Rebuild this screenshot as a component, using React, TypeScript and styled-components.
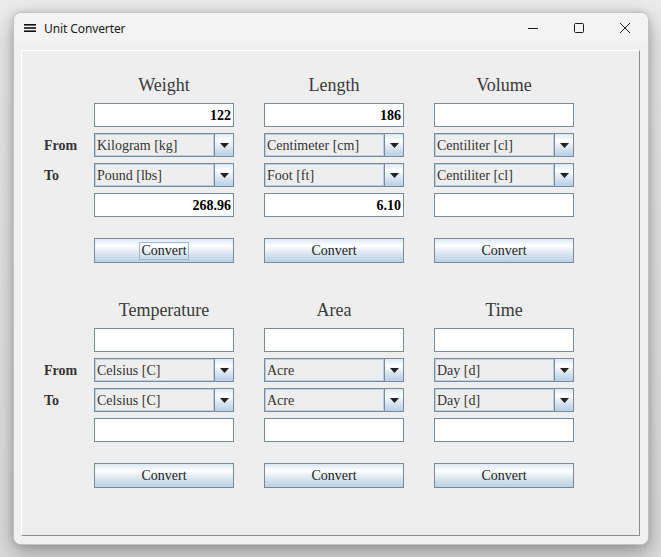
import React from "react";
import styled, { createGlobalStyle } from "styled-components";

const Global = createGlobalStyle`
  html, body { margin: 0; padding: 0; }
  body { width: 661px; height: 557px; overflow: hidden; background: #e6e6e6; }
`;

const Page = styled.div`
  width: 661px;
  height: 557px;
  box-sizing: border-box;
  padding: 12px 0 0 13px;
  background: linear-gradient(#ebebeb, #dcdcdc);
`;

const Window = styled.div`
  width: 636px;
  height: 533px;
  box-sizing: border-box;
  border: 1px solid #c2c2c2;
  border-radius: 8px;
  background: #f0f0f0;
  box-shadow: 0 8px 22px rgba(0, 0, 0, 0.33), 0 0 6px rgba(0, 0, 0, 0.12);
  display: flex;
  flex-direction: column;
  overflow: hidden;
`;

const TitleBar = styled.div`
  height: 30px;
  flex: none;
  display: flex;
  align-items: center;
  padding-left: 10px;
  background: #f3f3f3;
  font-family: "Segoe UI", "Noto Sans", "Open Sans", sans-serif;
  font-size: 12px;
  color: #1a1a1a;
`;

const AppIcon = styled.svg`
  width: 12px;
  height: 8px;
  margin-right: 8px;
  flex: none;
`;

const TitleText = styled.span`
  letter-spacing: -0.1px;
`;

const Controls = styled.div`
  margin-left: auto;
  display: flex;
  height: 100%;
`;

const CaptionButton = styled.div`
  width: 46px;
  height: 30px;
  display: flex;
  align-items: center;
  justify-content: center;
  color: #1a1a1a;
`;

const Content = styled.div`
  flex: 1;
  display: flex;
  padding: 7px 8px 8px 7px;
  background: #f0f0f0;
`;

const Panel = styled.div`
  flex: 1;
  display: flex;
  flex-direction: column;
  gap: 37px;
  box-sizing: border-box;
  padding: 24px 0 0 22px;
  border-top: 1px solid #ffffff;
  border-left: 1px solid #ffffff;
  border-right: 1px solid #8c8c8c;
  border-bottom: 1px solid #8c8c8c;
  background: #eeeeee;
  font-family: "Liberation Serif", "Times New Roman", serif;
`;

const Group = styled.div`
  display: flex;
  align-items: flex-start;
`;

const LabelCol = styled.div`
  width: 50px;
  flex: none;
  display: flex;
  flex-direction: column;
  gap: 6px;
  padding-top: 58px;
`;

const RowLabel = styled.div`
  height: 24px;
  box-sizing: border-box;
  padding-top: 1px;
  line-height: 24px;
  font-size: 14px;
  font-weight: bold;
  color: #333333;
  white-space: nowrap;
`;

const Units = styled.div`
  display: flex;
  gap: 30px;
`;

const UnitCol = styled.div`
  width: 140px;
  display: flex;
  flex-direction: column;
  gap: 6px;
`;

const UnitTitle = styled.div`
  height: 20px;
  line-height: 20px;
  margin-bottom: 2px;
  font-size: 18px;
  color: #3a3a3a;
  text-align: center;
  white-space: nowrap;
`;

const Field = styled.input`
  width: 140px;
  height: 24px;
  box-sizing: border-box;
  margin: 0;
  padding: 1px 2px 0 2px;
  border: 1px solid #7a8a99;
  border-radius: 0;
  background: #ffffff;
  font-family: "Liberation Serif", "Times New Roman", serif;
  font-size: 14px;
  font-weight: bold;
  color: #000000;
  text-align: right;
  outline: none;
`;

const Combo = styled.div`
  width: 140px;
  height: 24px;
  box-sizing: border-box;
  display: flex;
  border: 1px solid #7a8a99;
  background: #eeeeee;
`;

const ComboValue = styled.div`
  flex: 1;
  box-sizing: border-box;
  padding: 1px 0 0 2px;
  line-height: 22px;
  font-size: 14px;
  color: #333333;
  box-shadow: inset 0 0 0 1px #b8cfe5;
  white-space: nowrap;
  overflow: hidden;
`;

const oceanGradient = `linear-gradient(to bottom, #dde8f3 0%, #ffffff 30%, #dde8f3 60%, #b8cfe5 100%)`;

const ArrowButton = styled.div`
  width: 18px;
  flex: none;
  border-left: 1px solid #7a8a99;
  background: ${oceanGradient};
  display: flex;
  align-items: center;
  justify-content: center;
`;

const ConvertButton = styled.button`
  width: 140px;
  height: 25px;
  margin: 15px 0 0 0;
  padding: 0;
  box-sizing: border-box;
  border: 1px solid #7a8a99;
  border-radius: 0;
  background: ${oceanGradient};
  font-family: "Liberation Serif", "Times New Roman", serif;
  font-size: 14px;
  color: #222222;
  display: flex;
  align-items: center;
  justify-content: center;
  cursor: pointer;
`;

const ButtonText = styled.span<{ $focused?: boolean }>`
  display: block;
  height: 16px;
  line-height: 16px;
  padding: 0 1px;
  border: 1px solid ${(p) => (p.$focused ? "#a3b8cc" : "transparent")};
`;

type Unit = {
  title: string;
  from: string;
  to: string;
  input: string;
  output: string;
  focused?: boolean;
};

const groups: Unit[][] = [
  [
    { title: "Weight", from: "Kilogram [kg]", to: "Pound [lbs]", input: "122", output: "268.96", focused: true },
    { title: "Length", from: "Centimeter [cm]", to: "Foot [ft]", input: "186", output: "6.10" },
    { title: "Volume", from: "Centiliter [cl]", to: "Centiliter [cl]", input: "", output: "" },
  ],
  [
    { title: "Temperature", from: "Celsius [C]", to: "Celsius [C]", input: "", output: "" },
    { title: "Area", from: "Acre", to: "Acre", input: "", output: "" },
    { title: "Time", from: "Day [d]", to: "Day [d]", input: "", output: "" },
  ],
];

const DownArrow = () => (
  <svg width="9" height="5" viewBox="0 0 9 5">
    <path d="M0 0 H9 L4.5 5 Z" fill="#222" />
  </svg>
);

const ComboBox = ({ value }: { value: string }) => (
  <Combo>
    <ComboValue>{value}</ComboValue>
    <ArrowButton>
      <DownArrow />
    </ArrowButton>
  </Combo>
);

export default function App() {
  return (
    <>
      <Global />
      <Page>
        <Window>
          <TitleBar>
            <AppIcon viewBox="0 0 12 8">
              <rect x="0" y="0" width="12" height="1.6" fill="#111" />
              <rect x="0" y="3.2" width="12" height="1.6" fill="#111" />
              <rect x="0" y="6.4" width="12" height="1.6" fill="#111" />
            </AppIcon>
            <TitleText>Unit Converter</TitleText>
            <Controls>
              <CaptionButton>
                <svg width="10" height="10" viewBox="0 0 10 10">
                  <path d="M0 5.5 H10" stroke="#1a1a1a" strokeWidth="1" />
                </svg>
              </CaptionButton>
              <CaptionButton>
                <svg width="10" height="10" viewBox="0 0 10 10">
                  <rect x="0.5" y="0.5" width="9" height="9" rx="1" fill="none" stroke="#1a1a1a" strokeWidth="1" />
                </svg>
              </CaptionButton>
              <CaptionButton>
                <svg width="10" height="10" viewBox="0 0 10 10">
                  <path d="M0 0 L10 10 M10 0 L0 10" stroke="#1a1a1a" strokeWidth="1" />
                </svg>
              </CaptionButton>
            </Controls>
          </TitleBar>
          <Content>
            <Panel>
              {groups.map((g, gi) => (
                <Group key={gi}>
                  <LabelCol>
                    <RowLabel>From</RowLabel>
                    <RowLabel>To</RowLabel>
                  </LabelCol>
                  <Units>
                    {g.map((u) => (
                      <UnitCol key={u.title}>
                        <UnitTitle>{u.title}</UnitTitle>
                        <Field readOnly value={u.input} />
                        <ComboBox value={u.from} />
                        <ComboBox value={u.to} />
                        <Field readOnly value={u.output} />
                        <ConvertButton>
                          <ButtonText $focused={u.focused}>Convert</ButtonText>
                        </ConvertButton>
                      </UnitCol>
                    ))}
                  </Units>
                </Group>
              ))}
            </Panel>
          </Content>
        </Window>
      </Page>
    </>
  );
}
